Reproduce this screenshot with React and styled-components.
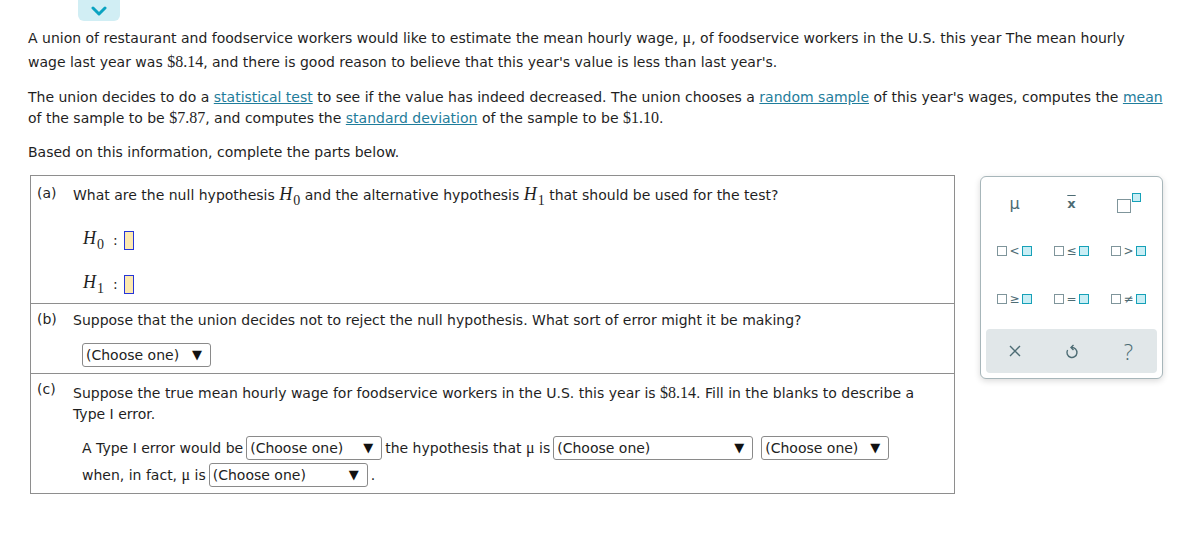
import styled, { createGlobalStyle } from 'styled-components';

const GlobalStyle = createGlobalStyle`
  body {
    margin: 0;
    background: #fff;
    font-family: Verdana, 'DejaVu Sans', sans-serif;
    font-size: 14px;
    color: #1f1f1f;
  }
`;

const Page = styled.div`
  padding: 0 10px 0 28px;
  width: 1183px;
  box-sizing: border-box;
`;

const Tab = styled.div`
  margin-left: 50px;
  width: 42px;
  height: 21px;
  background: #d1eef4;
  border-radius: 0 0 6px 6px;
  display: flex;
  align-items: center;
  justify-content: center;
`;

const Para = styled.p`
  margin: ${(p) => p.$top || 0}px 0 0;
  line-height: ${(p) => p.$lh || 21}px;
`;

const Num = styled.span`
  font-family: 'Liberation Serif', 'Times New Roman', serif;
  font-size: 16px;
  line-height: 1;
`;

const Link = styled.a`
  color: #1f7d9b;
  text-decoration: underline;
`;

const Work = styled.div`
  display: flex;
  align-items: flex-start;
  gap: 25px;
  margin-top: 12px;
`;

const Box = styled.div`
  flex-shrink: 0;
  margin-left: 2px;
  width: 925px;
  border: 1px solid #8e8e8e;
  box-sizing: border-box;
`;

const Part = styled.div`
  display: grid;
  grid-template-columns: 42px 1fr;
  padding: ${(p) => p.$pad || '8px 0 10px'};
  border-top: ${(p) => (p.$first ? 'none' : '1px solid #8e8e8e')};
`;

const Letter = styled.span`
  padding-left: 6px;
  line-height: 18px;
  margin-top: ${(p) => p.$up || 0}px;
`;

const Question = styled.div`
  line-height: 21px;
`;

const Rows = styled.div`
  grid-column: 2;
  padding-left: ${(p) => p.$indent || 9}px;
  display: flex;
  flex-direction: column;
  gap: ${(p) => p.$gap || 0}px;
  margin-top: ${(p) => p.$top || 0}px;
`;

const Hyp = styled.div`
  display: flex;
  align-items: center;
  height: 22px;
`;

const MathH = styled.span`
  font-family: 'Liberation Serif', 'Times New Roman', serif;
  font-style: italic;
  font-size: 18px;
  line-height: 1;
  sub {
    font-style: normal;
    font-size: 14px;
    vertical-align: -5px;
    margin-left: 1px;
  }
`;

const Colon = styled.span`
  margin-left: 9px;
  margin-right: 6px;
`;

const Blank = styled.span`
  display: inline-block;
  width: 8px;
  height: 17px;
  background: #fde9b0;
  border: 1px solid #2636d8;
`;

const Line = styled.div`
  display: flex;
  align-items: center;
  height: 27px;
  white-space: nowrap;
`;

const Select = styled.span`
  display: inline-flex;
  align-items: center;
  justify-content: space-between;
  box-sizing: border-box;
  width: ${(p) => p.$w}px;
  height: 24px;
  margin: 0 ${(p) => p.$mr ?? 3}px 0 ${(p) => p.$ml ?? 3}px;
  padding: 0 8px 0 3px;
  border: 1px solid #8a8a8a;
  border-radius: 3px;
  font-size: 14px;
  color: #222;
  &::after {
    content: '▼';
    font-size: 13px;
    color: #111;
  }
`;

const Mu = styled.span`
  font-family: 'Liberation Serif', 'Times New Roman', serif;
  font-size: 16px;
  line-height: 1;
`;

const Pad = styled.div`
  flex-shrink: 0;
  margin-top: 1px;
  width: 183px;
  box-sizing: border-box;
  border: 1px solid #a7b6ba;
  border-radius: 6px;
  box-shadow: 0 2px 6px rgba(0, 0, 0, 0.15);
  padding: 2px 5px 5px;
  background: #fff;
`;

const Keys = styled.div`
  display: grid;
  grid-template-columns: repeat(3, 1fr);
  grid-auto-rows: 48px;
  align-items: center;
  justify-items: center;
  margin-bottom: 6px;
`;

const Key = styled.div`
  color: #4d6c74;
  font-size: 15px;
  display: flex;
  align-items: ${(p) => (p.$top ? 'flex-start' : 'center')};
  gap: 1px;
`;

const Sq = styled.span`
  display: inline-block;
  box-sizing: border-box;
  width: ${(p) => p.$s || 10}px;
  height: ${(p) => p.$s || 10}px;
  margin-top: ${(p) => p.$mt || 0}px;
  border: 1.5px solid ${(p) => (p.$on ? '#16a1b8' : '#7f959b')};
  background: ${(p) => (p.$on ? '#c9eef5' : '#fff')};
`;

const Rel = styled.span`
  font-size: 12px;
  line-height: 1;
  color: #4d6c74;
  padding: 0 1px;
`;

const XBar = styled.span`
  font-weight: bold;
  font-size: 13px;
  color: #4d6c74;
  text-decoration: overline;
`;

const Footer = styled.div`
  display: grid;
  grid-template-columns: repeat(3, 1fr);
  height: 44px;
  align-items: center;
  justify-items: center;
  background: #e1e7e9;
  border-radius: 4px;
  color: #4d6c74;
`;

const Help = styled.span`
  font-family: 'Open Sans', 'DejaVu Sans', sans-serif;
  font-weight: 300;
  font-size: 22px;
  line-height: 1;
`;

function RelKey({ sym }) {
  return (
    <Key>
      <Sq />
      <Rel>{sym}</Rel>
      <Sq $on />
    </Key>
  );
}

export default function App() {
  return (
    <Page>
      <GlobalStyle />
      <Tab>
        <svg width="16" height="10" viewBox="0 0 16 10">
          <path d="M2 2 L8 8 L14 2" fill="none" stroke="#0ba3c1" strokeWidth="3" strokeLinecap="round" strokeLinejoin="round" />
        </svg>
      </Tab>
      <Para $top={5} $lh={24}>
        A union of restaurant and foodservice workers would like to estimate the mean hourly wage, <Mu>μ</Mu>, of foodservice
        workers in the U.S. this year The mean hourly
        <br />
        wage last year was <Num>$8.14</Num>, and there is good reason to believe that this year's value is less than last
        year's.
      </Para>
      <Para $top={13}>
        The union decides to do a <Link>statistical test</Link> to see if the value has indeed decreased. The union chooses
        a <Link>random sample</Link> of this year's wages, computes the <Link>mean</Link> of the sample to be <Num>$7.87</Num>,
        and computes the <Link>standard deviation</Link> of the sample to be <Num>$1.10</Num>.
      </Para>
      <Para $top={13}>Based on this information, complete the parts below.</Para>

      <Work>
        <Box>
          <Part $first $pad="9px 0 8px">
            <Letter $up={-1}>(a)</Letter>
            <Question>
              What are the null hypothesis <MathH>H<sub>0</sub></MathH> and the alternative hypothesis{' '}
              <MathH>H<sub>1</sub></MathH> that should be used for the test?
            </Question>
            <Rows $top={21} $gap={22} $indent={10}>
              <Hyp>
                <MathH>H<sub>0</sub></MathH>
                <Colon>:</Colon>
                <Blank />
              </Hyp>
              <Hyp>
                <MathH>H<sub>1</sub></MathH>
                <Colon>:</Colon>
                <Blank />
              </Hyp>
            </Rows>
          </Part>
          <Part $pad="6px 0 5px">
            <Letter>(b)</Letter>
            <Question>Suppose that the union decides not to reject the null hypothesis. What sort of error might it be making?</Question>
            <Rows $top={10}>
              <Line>
                <Select $w={129} $ml={0}>(Choose one)</Select>
              </Line>
            </Rows>
          </Part>
          <Part $pad="9px 0 5px">
            <Letter $up={-3}>(c)</Letter>
            <Question>
              Suppose the true mean hourly wage for foodservice workers in the U.S. this year is <Num>$8.14</Num>. Fill in the
              blanks to describe a<br />
              Type I error.
            </Question>
            <Rows $top={9}>
              <Line>
                A Type I error would be
                <Select $w={136}>(Choose one)</Select>
                the hypothesis that&nbsp;<Mu>μ</Mu>&nbsp;is
                <Select $w={200}>(Choose one)</Select>
                <Select $w={128} $ml={5}>(Choose one)</Select>
              </Line>
              <Line>
                when, in fact,&nbsp;<Mu>μ</Mu>&nbsp;is
                <Select $w={159}>(Choose one)</Select>
                .
              </Line>
            </Rows>
          </Part>
        </Box>

        <Pad>
          <Keys>
            <Key>
              <span style={{ fontSize: 16 }}>μ</span>
            </Key>
            <Key>
              <XBar>x</XBar>
            </Key>
            <Key $top>
              <Sq $s={14} $mt={6} />
              <Sq $on $s={9} />
            </Key>
            <RelKey sym="<" />
            <RelKey sym="≤" />
            <RelKey sym=">" />
            <RelKey sym="≥" />
            <RelKey sym="=" />
            <RelKey sym="≠" />
          </Keys>
          <Footer>
            <svg width="14" height="14" viewBox="0 0 14 14">
              <path d="M2 2 L12 12 M12 2 L2 12" stroke="#4d6c74" strokeWidth="1.4" />
            </svg>
            <svg width="14" height="16" viewBox="0 0 14 16">
              <path d="M6.5 4.5 A5 5 0 1 1 2.6 7" fill="none" stroke="#4d6c74" strokeWidth="1.4" />
              <path d="M8.5 2 L6 4.5 L8.5 7" fill="none" stroke="#4d6c74" strokeWidth="1.4" />
            </svg>
            <Help>?</Help>
          </Footer>
        </Pad>
      </Work>
    </Page>
  );
}
